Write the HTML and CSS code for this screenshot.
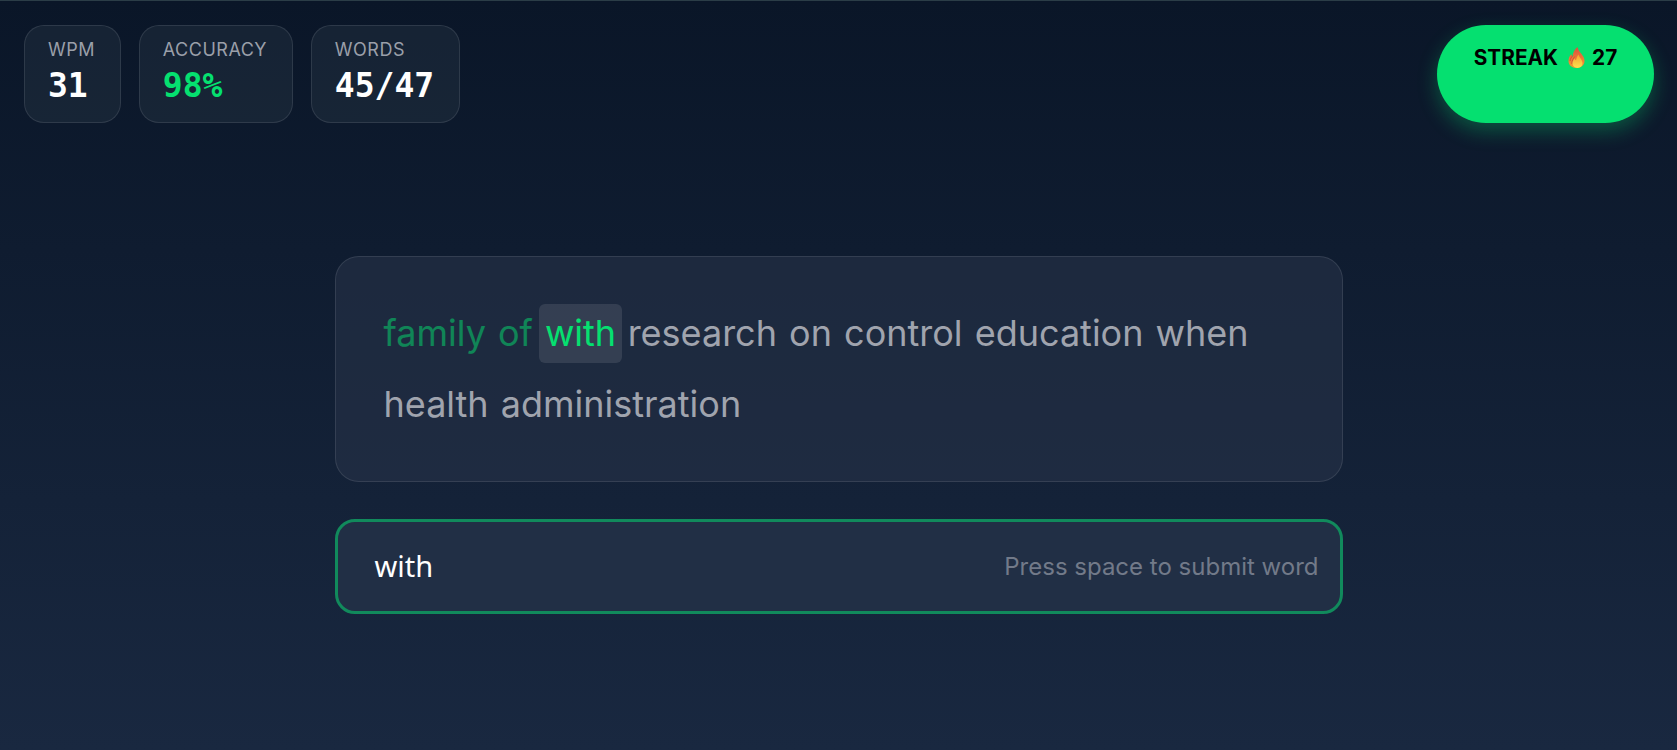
FILE: index.html
```html
<!DOCTYPE html>
<html lang="en">
  <head>
    <meta charset="UTF-8" />
    <title>Typing Test</title>
    <link rel="stylesheet" href="styles.css">
  </head>
  <body>
    <header class="topbar">
      <div class="stats">
        <div class="stat">
          <div class="stat-label">WPM</div>
          <div class="stat-value">31</div>
        </div>
        <div class="stat">
          <div class="stat-label">ACCURACY</div>
          <div class="stat-value green">98%</div>
        </div>
        <div class="stat">
          <div class="stat-label">WORDS</div>
          <div class="stat-value">45/47</div>
        </div>
      </div>
      <div class="streak">
        <span>STREAK</span>
        <svg class="flame" viewBox="0 0 16 21" aria-hidden="true">
          <defs>
            <linearGradient id="flameOuter" x1="0" y1="0" x2="0" y2="1">
              <stop offset="0" stop-color="#d9503f" />
              <stop offset="0.6" stop-color="#ef7d35" />
              <stop offset="1" stop-color="#f59a30" />
            </linearGradient>
            <linearGradient id="flameInner" x1="0" y1="0" x2="0" y2="1">
              <stop offset="0" stop-color="#f6a030" />
              <stop offset="1" stop-color="#fde24f" />
            </linearGradient>
          </defs>
          <path fill="url(#flameOuter)" d="M9 0c.6 3 2.200 4.600 3.800 6.800C14.500 9 16 11 16 14c0 4-3.400 7-8 7s-8-3-8-7c0-3 1.200-5.200 2.800-7C3 8.400 3.500 9.300 4.200 9.800 4 6 6 2.500 9 0z" />
          <path fill="none" stroke="#c9483c" stroke-width="0.8" d="M1.600 14c.2-2.500 1.400-4 2.800-5.500M3.400 17c-.2-3 1.200-5.400 3-7.500" />
          <path fill="url(#flameInner)" d="M10 7.500c.4 2 1.600 3 2.600 4.700.9 1.500 1.400 2.800 1.400 4.100 0 2.800-2.500 4.700-5 4.700s-5-1.900-5-4.700c0-2.100 1.200-3.500 2.200-4.800.3 1 .7 1.500 1.300 1.800C8.200 11 8.700 9 10 7.500z" />
        </svg>
        <span>27</span>
      </div>
    </header>

    <main>
      <div class="prompt">
        <span class="done">family</span> <span class="done">of</span><span class="current">with</span><span>research</span> <span>on</span> <span>control</span> <span>education</span> <span>when</span> <span>health</span> <span>administration</span>
      </div>
      <div class="entry">
        <span class="entry-text">with</span>
        <span class="entry-hint">Press space to submit word</span>
      </div>
    </main>
  </body>
</html>
```

FILE: styles.css
```css
* {
  box-sizing: border-box;
}

html,
body {
  height: 100%;
  margin: 0;
  overflow: hidden;
}

body {
  background: linear-gradient(180deg, #0a1628 0%, #192840 100%);
  border-top: 1px solid #2b3d47;
  color: #fff;
  font-family: Inter, "Liberation Sans", sans-serif;
}

.topbar {
  align-items: stretch;
  display: flex;
  justify-content: space-between;
  padding: 24px 23px 0 24px;
}

.stats {
  display: flex;
  gap: 18px;
}

.stat {
  background-color: rgba(40, 54, 70, 0.4);
  border: 1px solid rgba(255, 255, 255, 0.1);
  border-radius: 20px;
  height: 98px;
  padding: 11px 24.8px 11px 23px;
}

.stat-label {
  color: #9a9fa9;
  font-size: 18px;
  letter-spacing: 0.5px;
  line-height: 26px;
}

.stat-value {
  font-family: "DejaVu Sans Mono", monospace;
  font-size: 33px;
  font-weight: 700;
  line-height: 45px;
}

.green {
  color: #05e070;
}

.streak {
  align-items: flex-start;
  background-color: #05e070;
  border-radius: 49px;
  box-shadow: 0 8px 20px rgba(5, 224, 112, 0.3);
  color: #000;
  display: flex;
  font-size: 20.8px;
  font-weight: 700;
  gap: 7px;
  height: 98px;
  justify-content: center;
  line-height: 30px;
  padding: 18px 36px 0;
  width: 217px;
}

.flame {
  flex-shrink: 0;
  height: 21px;
  margin-left: 3px;
  margin-top: 4px;
  width: 17px;
}

main {
  display: flex;
  flex-direction: column;
  gap: 37px;
  margin: 133px auto 0;
  width: 1008px;
}

.prompt {
  background-color: rgba(38, 50, 72, 0.6);
  border: 1px solid rgba(255, 255, 255, 0.1);
  border-radius: 24px;
  color: #a0a4ae;
  font-size: 36px;
  height: 226px;
  line-height: 71px;
  padding: 41px 48px;
  word-spacing: 2px;
}

.done {
  color: #05e070;
  opacity: 0.5;
}

.current {
  background-color: rgba(255, 255, 255, 0.1);
  border-radius: 6px;
  color: #05e070;
  display: inline-block;
  height: 59px;
  line-height: 59px;
  margin: 0 5.5px 0 6px;
  padding: 0 6px;
}

.entry {
  align-items: center;
  background-color: #212f45;
  border: 3px solid #118a5c;
  border-radius: 20px;
  display: flex;
  height: 95px;
  justify-content: space-between;
  padding: 0 21px 0 37px;
}

.entry-text {
  font-family: "Noto Sans", sans-serif;
  font-size: 29px;
  margin-bottom: 2px;
}

.entry-hint {
  color: #727a89;
  font-size: 24px;
}
```
